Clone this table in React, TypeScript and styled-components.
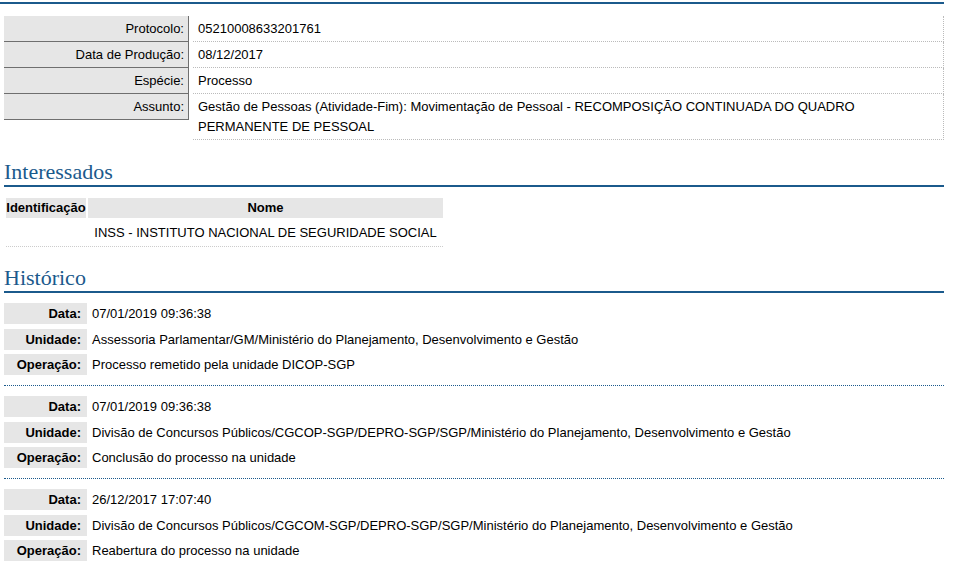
import styled, { createGlobalStyle } from 'styled-components'

const Blue = '#1b5a8c'

const GlobalStyle = createGlobalStyle`
  body {
    margin: 0;
    background: #fff;
    font-family: 'Liberation Sans', Arial, sans-serif;
    font-size: 13px;
    color: #000;
  }
`

const properties = [
  { label: 'Protocolo:', value: '05210008633201761' },
  { label: 'Data de Produção:', value: '08/12/2017' },
  { label: 'Espécie:', value: 'Processo' },
  {
    label: 'Assunto:',
    value:
      'Gestão de Pessoas (Atividade-Fim): Movimentação de Pessoal - RECOMPOSIÇÃO CONTINUADA DO QUADRO PERMANENTE DE PESSOAL',
  },
]

const historico = [
  {
    data: '07/01/2019 09:36:38',
    unidade: 'Assessoria Parlamentar/GM/Ministério do Planejamento, Desenvolvimento e Gestão',
    operacao: 'Processo remetido pela unidade DICOP-SGP',
  },
  {
    data: '07/01/2019 09:36:38',
    unidade:
      'Divisão de Concursos Públicos/CGCOP-SGP/DEPRO-SGP/SGP/Ministério do Planejamento, Desenvolvimento e Gestão',
    operacao: 'Conclusão do processo na unidade',
  },
  {
    data: '26/12/2017 17:07:40',
    unidade:
      'Divisão de Concursos Públicos/CGCOM-SGP/DEPRO-SGP/SGP/Ministério do Planejamento, Desenvolvimento e Gestão',
    operacao: 'Reabertura do processo na unidade',
  },
]

export default function App() {
  return (
    <>
      <GlobalStyle />
      <Page>
        <TopRule />
        <Content>
          <PropertyGrid>
            {properties.map((p) => (
              <PropertyRow key={p.label}>
                <PropertyLabel>{p.label}</PropertyLabel>
                <PropertyValue>{p.value}</PropertyValue>
              </PropertyRow>
            ))}
          </PropertyGrid>

          <SectionTitle>Interessados</SectionTitle>
          <InterestedTable>
            <InterestedHead>
              <HeadCell>Identificação</HeadCell>
              <HeadCell>Nome</HeadCell>
            </InterestedHead>
            <InterestedRow>
              <span />
              <span>INSS - INSTITUTO NACIONAL DE SEGURIDADE SOCIAL</span>
            </InterestedRow>
          </InterestedTable>

          <SectionTitle>Histórico</SectionTitle>
          {historico.map((h, i) => (
            <HistoryEntry key={i}>
              <HistoryLabel>Data:</HistoryLabel>
              <HistoryValue>{h.data}</HistoryValue>
              <HistoryLabel>Unidade:</HistoryLabel>
              <HistoryValue>{h.unidade}</HistoryValue>
              <HistoryLabel>Operação:</HistoryLabel>
              <HistoryValue>{h.operacao}</HistoryValue>
            </HistoryEntry>
          ))}
        </Content>
      </Page>
    </>
  )
}

const Page = styled.div`
  width: 944px;
  padding-top: 2px;
`

const TopRule = styled.div`
  height: 2px;
  background: ${Blue};
`

const Content = styled.div`
  padding-left: 4px;
`

const PropertyGrid = styled.div`
  margin-top: 12px;
  display: flex;
  flex-direction: column;
`

const PropertyRow = styled.div`
  display: grid;
  grid-template-columns: 185px 1fr;
  column-gap: 4px;
  align-items: start;
`

const PropertyLabel = styled.div`
  background: #e6e6e6;
  border-right: 1px solid #6f6f6f;
  border-bottom: 1px solid #6f6f6f;
  height: 25px;
  line-height: 26px;
  padding-right: 4px;
  text-align: right;
  white-space: nowrap;
`

const PropertyValue = styled.div`
  padding: 3px 5px 2px;
  line-height: 20px;
  border-bottom: 1px dotted #bbb;
  border-right: 1px dotted #bbb;
`

const SectionTitle = styled.h2`
  margin: 19px 0 0;
  font-family: 'Liberation Serif', 'Times New Roman', serif;
  font-weight: normal;
  font-size: 22px;
  line-height: 26px;
  color: ${Blue};
  border-bottom: 2px solid ${Blue};

  & + div + & {
    margin-top: 18px;
  }
`

const InterestedTable = styled.div`
  margin: 11px 0 0 2px;
  width: 437px;
`

const InterestedHead = styled.div`
  display: grid;
  grid-template-columns: 80px 355px;
  column-gap: 2px;
`

const HeadCell = styled.div`
  background: #e6e6e6;
  font-weight: bold;
  text-align: center;
  line-height: 20px;
  white-space: nowrap;
`

const InterestedRow = styled.div`
  display: grid;
  grid-template-columns: 80px 355px;
  column-gap: 2px;
  margin-top: 2px;
  line-height: 26px;
  text-align: center;
  border-bottom: 1px dotted #ccc;
`

const HistoryEntry = styled.div`
  display: grid;
  grid-template-columns: 83px 1fr;
  column-gap: 4px;
  row-gap: 4.5px;
  padding: 10px 0;
  border-bottom: 1px dotted ${Blue};
`

const HistoryLabel = styled.div`
  background: #e6e6e6;
  font-weight: bold;
  text-align: right;
  padding-right: 6px;
  line-height: 21px;
`

const HistoryValue = styled.div`
  line-height: 21px;
  padding-left: 1px;
`
